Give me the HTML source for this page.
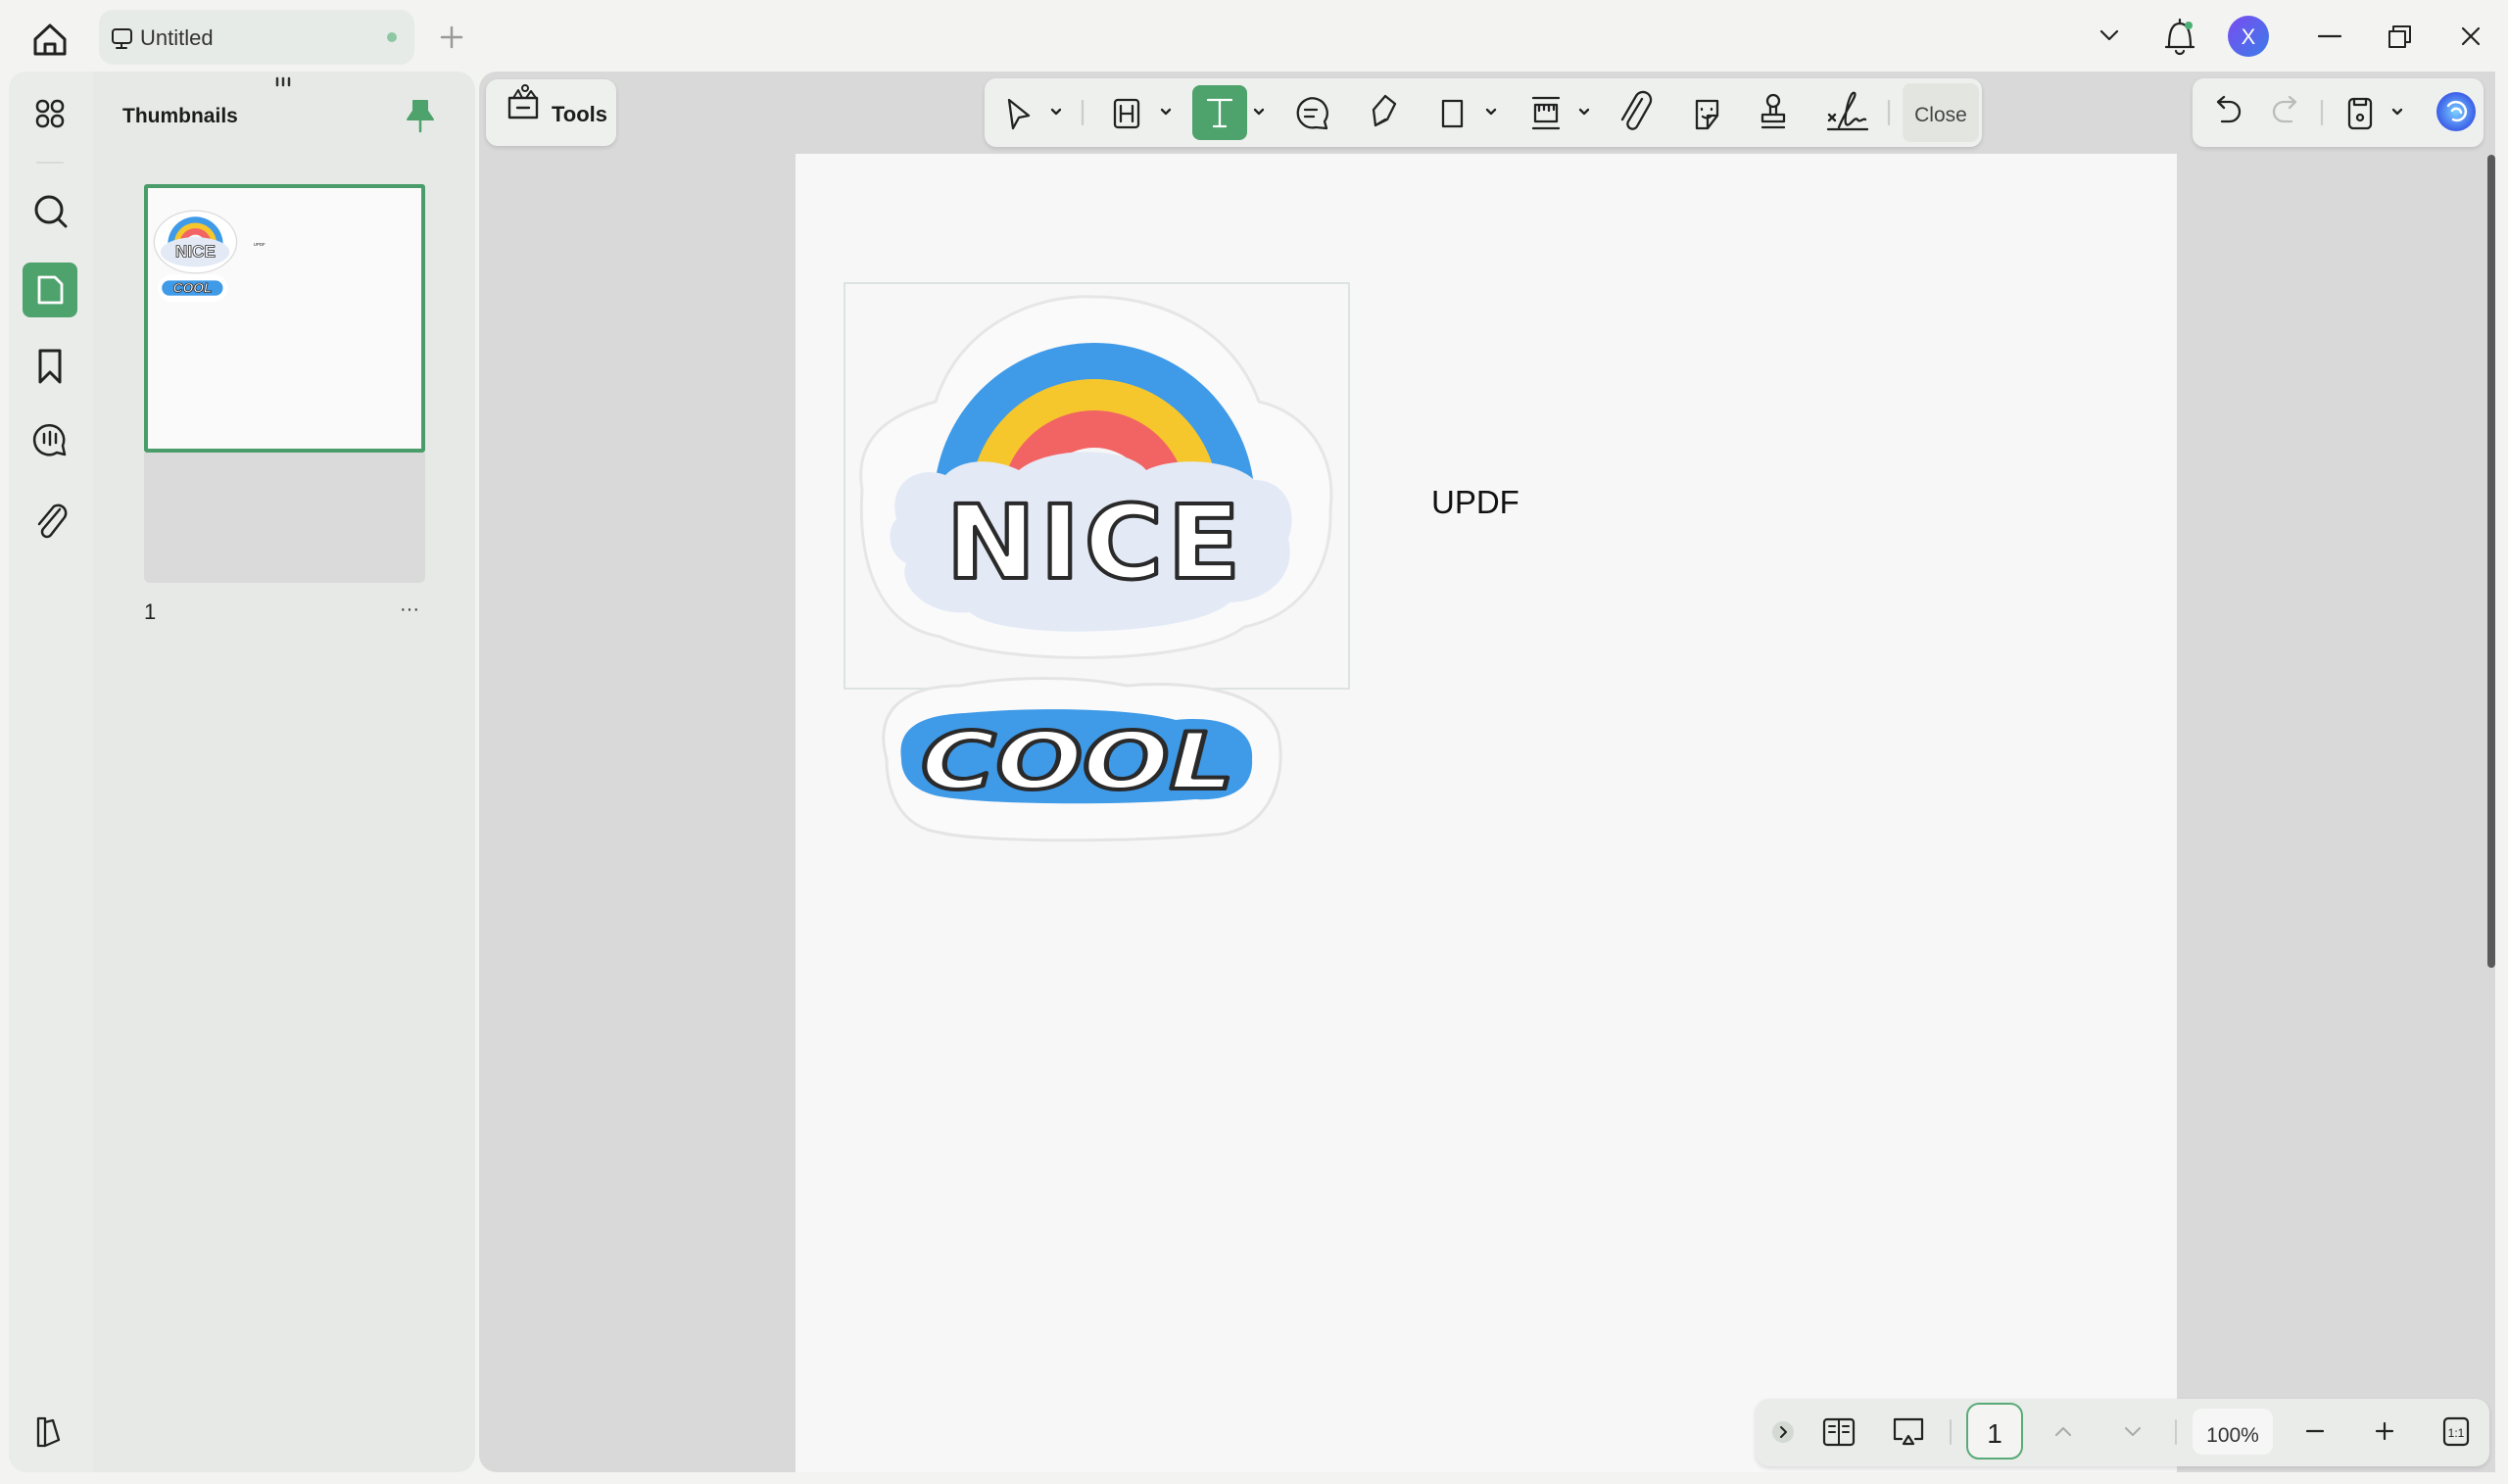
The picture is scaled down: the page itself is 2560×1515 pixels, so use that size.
<!DOCTYPE html>
<html><head><meta charset="utf-8"><style>
html,body{margin:0;padding:0;width:2560px;height:1515px;overflow:hidden;background:#f3f4f2;font-family:"Liberation Sans",sans-serif}
.a{position:absolute}
</style></head><body>
<div class="a" style="left:101px;top:10px;width:322px;height:56px;background:#e7ebe8;border-radius:14px"></div>
<div class="a" style="left:9px;top:73px;width:476px;height:1430px;background:#e6e9e6;border-radius:18px"></div>
<div class="a" style="left:9px;top:73px;width:86px;height:1430px;background:#e9ece9;border-radius:18px 0 0 18px"></div>
<div class="a" style="left:489px;top:73px;width:2058px;height:1430px;background:#dad9da;border-radius:18px 0 0 18px"></div>
<div class="a" style="left:812px;top:157px;width:1410px;height:1346px;background:#f7f7f7"></div>
<div class="a" style="left:2539px;top:158px;width:8px;height:830px;background:#5a5a5a;border-radius:4px"></div>
<div class="a" style="left:496px;top:81px;width:133px;height:68px;background:#eef0ee;border-radius:12px;box-shadow:0 2px 5px rgba(0,0,0,.12)"></div>
<div class="a" style="left:1005px;top:80px;width:1018px;height:70px;background:#eef0ee;border-radius:12px;box-shadow:0 2px 5px rgba(0,0,0,.12)"></div>
<div class="a" style="left:2238px;top:80px;width:297px;height:70px;background:#eef0ee;border-radius:12px;box-shadow:0 2px 5px rgba(0,0,0,.12)"></div>
<div class="a" style="left:1792px;top:1428px;width:749px;height:69px;background:#e9ece9;border-radius:14px;box-shadow:0 2px 5px rgba(0,0,0,.12)"></div>
<div class="a" style="left:147px;top:188px;width:287px;height:274px;background:#fafafa;border:4px solid #4a9d6a;box-sizing:border-box;border-radius:3px"></div>
<div class="a" style="left:147px;top:462px;width:287px;height:133px;background:#dadada;border-radius:0 0 6px 6px"></div>
<svg class="a" style="left:0;top:0" width="2560" height="1515" viewBox="0 0 2560 1515" fill="none" stroke="#222" stroke-width="3" stroke-linecap="round" stroke-linejoin="round">
<path d="M36 40 L51 26 L66 40 V55 H36 Z M46 55 V45 H56 V55"/>
<rect x="115" y="30" width="19" height="14" rx="3" stroke-width="2"/><path d="M124 44 V49 M119 49 H129" stroke-width="2"/>
<text x="143" y="46" font-size="22" fill="#333" stroke="none">Untitled</text>
<circle cx="400" cy="38" r="5" fill="#8ec7a4" stroke="none"/>
<path d="M461 28 V48 M451 38 H471" stroke="#999" stroke-width="2.5"/>
<path d="M2145 32 L2153 40 L2161 32" stroke-width="2.2"/>
<path d="M2214 48 C2214 30 2218 24 2225 24 C2232 24 2236 30 2236 48 H2211 H2239 M2221 52 C2222 56 2228 56 2229 52 M2225 20 V24" stroke-width="2.2"/>
<circle cx="2234" cy="26" r="4" fill="#4caf73" stroke="none"/>
<defs><linearGradient id="av" x1="0" y1="0" x2="1" y2="1"><stop offset="0" stop-color="#7a4cf0"/><stop offset="1" stop-color="#3b7ce8"/></linearGradient>
<radialGradient id="ai"><stop offset="0" stop-color="#7ad0ff"/><stop offset="1" stop-color="#3b5de8"/></radialGradient></defs>
<circle cx="2295" cy="37" r="21" fill="url(#av)" stroke="none"/>
<text x="2295" y="45" font-size="22" text-anchor="middle" fill="#fff" stroke="none">X</text>
<path d="M2367 37 H2389" stroke-width="2.2"/>
<rect x="2439" y="32" width="16" height="16" stroke-width="2"/><path d="M2443 32 V27 H2460 V43 H2455" stroke-width="2"/>
<path d="M2514 29 L2530 45 M2530 29 L2514 45" stroke-width="2.2"/>
<!-- rail -->
<g stroke-width="2.5"><rect x="38" y="103" width="11" height="11" rx="5"/><rect x="53" y="103" width="11" height="11" rx="5"/><rect x="38" y="118" width="11" height="11" rx="5"/><rect x="53" y="118" width="11" height="11" rx="5"/></g>
<path d="M38 166 H64" stroke="#d8dbd8" stroke-width="2"/>
<circle cx="50" cy="214" r="13"/><path d="M60 224 L67 231"/>
<rect x="23" y="268" width="56" height="56" rx="8" fill="#4ea26c" stroke="none"/>
<path d="M40 283 H56 L63 290 V309 H40 Z" stroke="#fff" stroke-width="2.8"/>
<path d="M41 358 H61 V390 L51 380 L41 390 Z"/>
<path d="M58 462 A15 15 0 1 1 64 455 L66 464 Z M45 443 V452 M51 441 V454 M57 443 V452" stroke-width="2.5"/>
<path d="M61 520 L44 540 A5 5 0 0 0 52 546 L66 528 A8 8 0 0 0 55 517 L40 535" stroke-width="2.5"/>
<path d="M39 1448 H46 V1476 H39 Z M46 1452 L54 1450 L60 1470 L46 1476" stroke-width="2.3"/>
<path d="M283 80 V87 M289 80 V87 M295 80 V87" stroke="#333" stroke-width="2.5"/>
<text x="125" y="125" font-size="21" font-weight="bold" fill="#1c1c1c" stroke="none">Thumbnails</text>
<path d="M422 103 H436 V113 L442 122 H416 L422 113 Z" fill="#4ea26c" stroke="#4ea26c" stroke-width="2"/><path d="M429 122 V134" stroke="#4ea26c" stroke-width="2.5"/>
<text x="147" y="632" font-size="22" fill="#222" stroke="none">1</text>
<text x="408" y="628" font-size="20" fill="#333" stroke="none">···</text>
<g transform="translate(147,188) scale(0.172) translate(-812,-157)" stroke="none">
<ellipse cx="1117" cy="500" rx="245" ry="185" fill="#fff" stroke="#ddd" stroke-width="8"/>
<path d="M953 514 A164 164 0 0 1 1281 514 Z" fill="#3f9ae8"/><path d="M990 514 A127 127 0 0 1 1244 514 Z" fill="#f6c72c"/><path d="M1022 514 A95 95 0 0 1 1212 514 Z" fill="#f26464"/><path d="M1060 514 A57 57 0 0 1 1174 514 Z" fill="#f6f6f6"/>
<ellipse cx="1115" cy="560" rx="205" ry="88" fill="#e3eaf6"/>
<text x="1117" y="590" font-size="100" font-weight="bold" text-anchor="middle" fill="#fff" stroke="#333" stroke-width="5">NICE</text>
<rect x="895" y="693" width="414" height="162" rx="80" fill="#fff"/><rect x="918" y="729" width="362" height="89" rx="44" fill="#3f9ae8"/>
<text x="1100" y="800" font-size="80" font-weight="bold" font-style="italic" text-anchor="middle" fill="#fff" stroke="#333" stroke-width="5">COOL</text>
<text x="1461" y="523" font-size="26" fill="#222">UPDF</text>
</g>
<path d="M520 100 H548 V120 H520 Z M528 110 H540" stroke-width="2.4"/><path d="M524 100 L529 92 L533 100 M537 100 L542 93 L547 100" stroke-width="2"/><circle cx="536" cy="90" r="3" stroke-width="2"/>
<text x="563" y="124" font-size="22" font-weight="bold" fill="#1c1c1c" stroke="none">Tools</text>
<g stroke-width="2.3">
<path d="M1030 102 L1050 118 L1040 120 L1034 131 Z"/><path d="M1074 112 L1078 116 L1082 112"/>
<path d="M1105 103 V127" stroke="#ccc"/>
<rect x="1138" y="102" width="24" height="28" rx="3"/><path d="M1144 108 V124 M1156 108 V124 M1144 116 H1156"/><path d="M1186 112 L1190 116 L1194 112"/>
<rect x="1217" y="87" width="56" height="56" rx="8" fill="#4ea26c" stroke="none"/>
<path d="M1233 102 H1257 M1245 102 V129 M1239 129 H1251" stroke="#fff"/><path d="M1281 112 L1285 116 L1289 112"/>
<path d="M1343 130 A15 15 0 1 1 1352 124 L1354 131 Z M1332 112 H1344 M1332 119 H1341"/>
<path d="M1404 128 L1402 112 L1414 98 L1424 106 L1416 122 Z M1404 128 L1414 122"/>
<rect x="1473" y="103" width="19" height="26"/><path d="M1518 112 L1522 116 L1526 112"/>
<path d="M1565 100 H1591 M1565 131 H1591 M1567 107 H1589 V124 H1567 Z M1571 107 V113 M1576 107 V112 M1581 107 V113 M1586 107 V112"/><path d="M1613 112 L1617 116 L1621 112"/>
<path d="M1676 101 L1662 124 A5 5 0 0 0 1671 129 L1684 106 A8 8 0 0 0 1670 98 L1656 122"/>
<path d="M1732 103 H1753 V118 L1743 131 H1732 Z M1753 118 H1743 V131 M1737 111 V112 M1747 111 V112 M1738 119 Q1742 122 1746 119"/>
<circle cx="1810" cy="103" r="6"/><path d="M1807 109 V117 M1813 109 V117 M1799 117 H1821 V124 H1799 Z M1799 130 H1821"/>
<path d="M1867 123 L1873 117 M1867 117 L1873 123 M1877 130 C1885 110 1896 98 1893 95 C1888 92 1882 120 1884 126 C1887 132 1893 118 1896 122 C1898 126 1902 120 1904 122 M1866 132 H1906"/>
<path d="M1928 103 V127" stroke="#ccc"/>
</g>
<rect x="1942" y="85" width="78" height="60" rx="8" fill="#e3e6e0" stroke="none"/>
<text x="1981" y="124" font-size="21" text-anchor="middle" fill="#444" stroke="none">Close</text>
<g stroke-width="2.3">
<path d="M2264 104 L2270 99 L2264 104 L2270 110 M2264 104 H2276 A9 9 0 0 1 2276 124 H2268"/>
<path d="M2343 104 L2337 99 M2343 104 L2337 110 M2343 104 H2331 A9 9 0 0 0 2331 124 H2339" stroke="#bbb"/>
<path d="M2370 103 V127" stroke="#ccc"/>
<rect x="2398" y="101" width="22" height="30" rx="4"/><circle cx="2409" cy="120" r="3"/><path d="M2403 101 V107 H2415 V101"/>
<path d="M2443 112 L2447 116 L2451 112"/>
</g>
<circle cx="2507" cy="114" r="20" fill="url(#ai)" stroke="none"/>
<path d="M2499 108 A10 10 0 0 1 2516 110 A9 9 0 0 1 2504 122 M2503 113 A5 5 0 0 1 2512 115" stroke="#fff" stroke-width="2.5"/>
<rect x="862" y="289" width="515" height="414" fill="none" stroke="#dde3e3" stroke-width="2"/>
<g stroke="none">
<path d="M880 500 C870 440 920 420 955 410 C980 330 1060 300 1117 303 C1190 303 1260 340 1285 410 C1330 420 1365 460 1358 520 C1360 590 1320 630 1270 640 C1220 680 1020 680 960 650 C900 640 875 580 880 500 Z" fill="#fafafa" stroke="#e6e6e6" stroke-width="3"/>
<path d="M953 514 A164 164 0 0 1 1281 514 Z" fill="#3f9ae8"/>
<path d="M990 514 A127 127 0 0 1 1244 514 Z" fill="#f6c72c"/>
<path d="M1022 514 A95 95 0 0 1 1212 514 Z" fill="#f26464"/>
<path d="M1060 514 A57 57 0 0 1 1174 514 Z" fill="#f6f6f6"/>
<path d="M915 530 C905 490 940 475 965 485 C985 465 1020 470 1040 480 C1070 455 1150 455 1170 480 C1200 465 1260 470 1280 490 C1315 490 1325 525 1315 550 C1325 590 1290 615 1255 615 C1220 650 1020 655 990 625 C950 630 915 600 925 575 C905 565 905 540 915 530 Z" fill="#e3eaf6"/>
<text x="1118" y="590" font-size="104" font-weight="bold" text-anchor="middle" fill="#fff" stroke="#2a2a2a" stroke-width="4" letter-spacing="4" font-family="DejaVu Sans" textLength="305" lengthAdjust="spacingAndGlyphs">NICE</text>
<path d="M905 775 C890 720 930 700 980 700 C1030 690 1100 690 1150 700 C1200 695 1290 700 1305 750 C1315 800 1290 850 1240 852 C1150 860 1000 860 960 850 C920 845 905 810 905 775 Z" fill="#fafafa" stroke="#e4e4e4" stroke-width="3"/>
<path d="M920 775 C915 740 945 730 985 728 C1050 722 1150 722 1200 735 C1250 730 1280 745 1278 775 C1280 805 1255 818 1220 816 C1150 822 1020 822 965 814 C935 810 920 795 920 775 Z" fill="#3f9ae8"/>
<text x="1100" y="805" font-size="80" font-weight="bold" font-style="italic" text-anchor="middle" fill="#fff" stroke="#2a2a2a" stroke-width="4" font-family="DejaVu Sans" textLength="320" lengthAdjust="spacingAndGlyphs">COOL</text>
</g>
<text x="1461" y="524" font-size="33" fill="#111" stroke="none">UPDF</text>
<circle cx="1820" cy="1462" r="11" fill="#d3d9d3" stroke="none"/><path d="M1818 1457 L1823 1462 L1818 1467" stroke-width="2"/>
<rect x="1862" y="1449" width="30" height="26" rx="3" stroke-width="2.2"/><path d="M1877 1449 V1475 M1867 1456 H1873 M1867 1462 H1873 M1881 1456 H1887 M1881 1462 H1887" stroke-width="2"/>
<path d="M1941 1469 H1934 V1449 H1962 V1469 H1955 M1948 1466 L1953 1474 H1943 Z" stroke-width="2.2"/>
<path d="M1991 1450 V1474 M2221 1450 V1474" stroke="#ccc" stroke-width="2"/>
<rect x="2008" y="1433" width="56" height="56" rx="12" fill="#f4f5f3" stroke="#5aaa78" stroke-width="2"/>
<text x="2036" y="1473" font-size="28" text-anchor="middle" fill="#222" stroke="none">1</text>
<path d="M2099 1465 L2106 1458 L2113 1465 M2170 1458 L2177 1465 L2184 1458" stroke="#aaa" stroke-width="2"/>
<rect x="2238" y="1438" width="82" height="47" rx="10" fill="#f5f6f5" stroke="none"/>
<text x="2279" y="1472" font-size="21" text-anchor="middle" fill="#333" stroke="none">100%</text>
<path d="M2355 1461 H2371 M2426 1461 H2442 M2434 1453 V1469" stroke-width="2.2"/>
<rect x="2495" y="1448" width="24" height="27" rx="4" stroke-width="2.2"/>
<text x="2507" y="1467" font-size="12" text-anchor="middle" fill="#222" stroke="none">1:1</text>
</svg>
</body></html>
